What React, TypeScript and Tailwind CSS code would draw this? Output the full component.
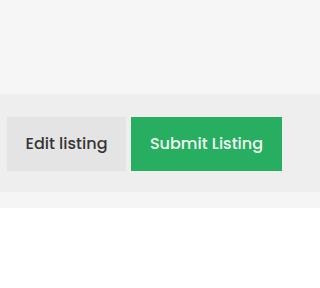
export default function App() {
  return (
    <div className="flex h-[288px] w-full flex-col overflow-hidden bg-white font-['Poppins','Inter',sans-serif]">
      <div className="h-[94px] bg-[#f6f6f6]" />
      <div className="flex h-[98px] items-start gap-[5px] bg-[#eeeeee] pl-[7px] pr-[6px] pt-[23px]">
        <button className="flex h-[54px] w-[119px] items-center justify-center bg-[#e4e4e4] text-[16px] font-medium text-[#363636]">
          Edit listing
        </button>
        <button className="flex h-[54px] w-[151px] items-center justify-center bg-[#27ae60] text-[16px] font-medium text-[#eefaf1]">
          Submit Listing
        </button>
      </div>
      <div className="h-[16px] bg-[#f5f5f5]" />
      <div className="flex-1 bg-white" />
    </div>
  );
}
